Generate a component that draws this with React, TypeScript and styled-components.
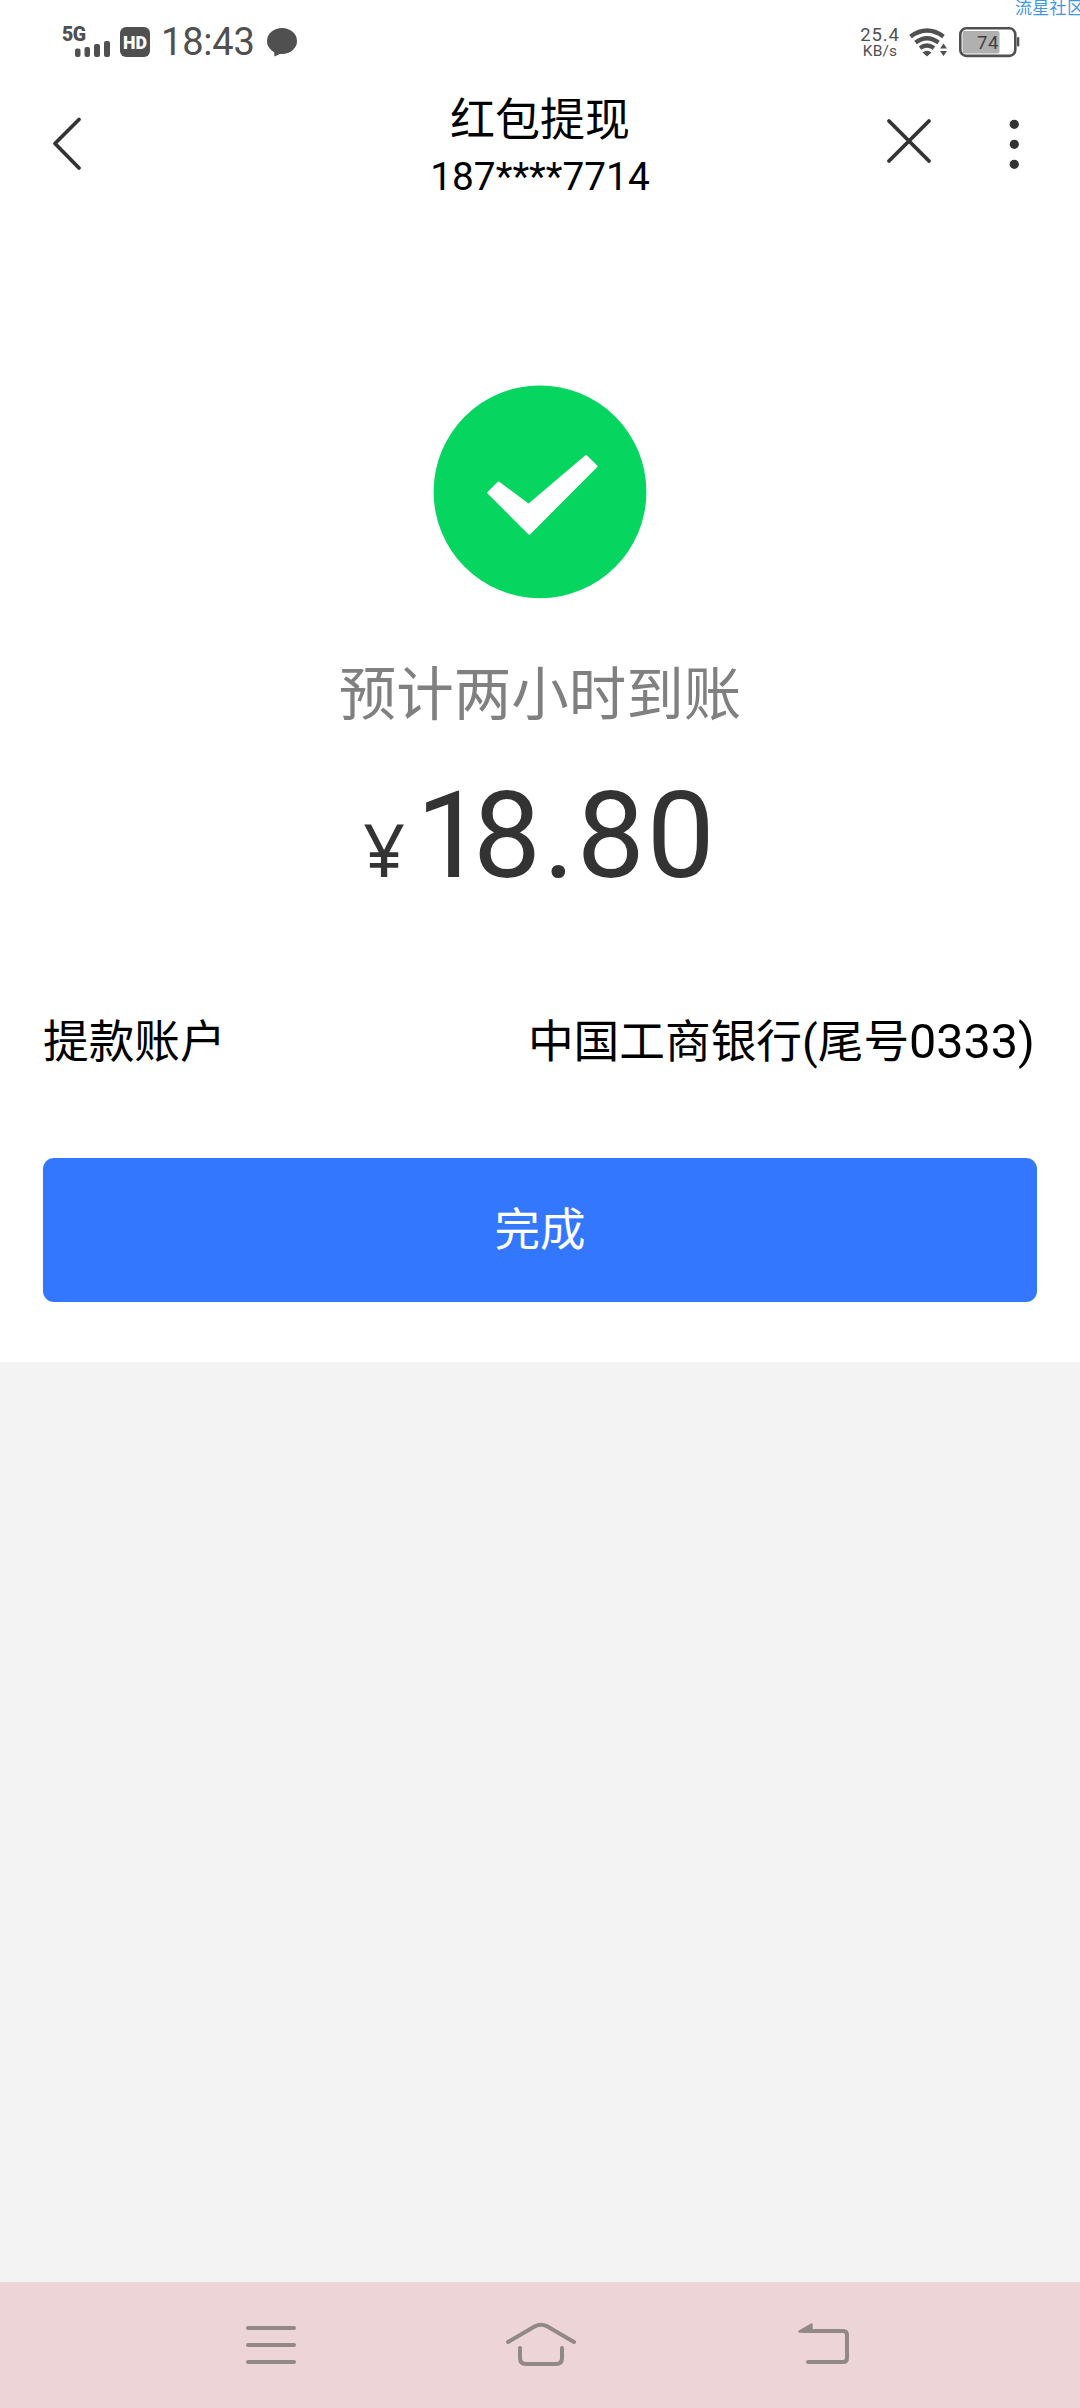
import React from "react";
import styled, { createGlobalStyle } from "styled-components";

const GlobalStyle = createGlobalStyle`
  *, *::before, *::after { box-sizing: border-box; }
  body {
    margin: 0;
    background: #f3f3f3;
    font-family: Roboto, "Noto Sans CJK SC", sans-serif;
  }
  svg { display: block; flex: none; }
`;

const Screen = styled.div`
  position: relative;
  width: 1080px;
  height: 2408px;
  display: flex;
  flex-direction: column;
  overflow: hidden;
  background: #f3f3f3;
`;

const Watermark = styled.span`
  position: absolute;
  top: -1px;
  left: 1015px;
  font-size: 17px;
  line-height: 18px;
  letter-spacing: 0.3px;
  white-space: nowrap;
  color: #3f97ea;
`;

const StatusBar = styled.header`
  height: 84px;
  padding: 0 60px 0 61px;
  display: flex;
  justify-content: space-between;
  align-items: center;
  background: #fff;
  color: #505050;
`;

const StatusGroup = styled.div`
  display: flex;
  align-items: center;
`;

const Clock = styled.span`
  margin: 0 12px 0 10px;
  width: 93px;
  font-size: 38px;
  line-height: 44px;
  letter-spacing: -0.2px;
  white-space: nowrap;
`;

const Speed = styled.div`
  width: 40px;
  margin-right: 8px;
  padding-top: 2px;
  display: flex;
  flex-direction: column;
  align-items: center;
`;

const SpeedLine = styled.span<{ $size: number; $height: number; $spacing: number }>`
  font-size: ${(p) => p.$size}px;
  line-height: ${(p) => p.$height}px;
  letter-spacing: ${(p) => p.$spacing}px;
`;

const BatterySlot = styled.div`
  margin-left: 6px;
`;

const TitleBar = styled.nav`
  height: 132px;
  display: grid;
  grid-template-columns: 340px 1fr 340px;
  background: #fff;
`;

const TitleSide = styled.div<{ $end?: boolean }>`
  display: flex;
  justify-content: ${(p) => (p.$end ? "flex-end" : "flex-start")};
  padding: ${(p) => (p.$end ? "28px 48px 0 0" : "28px 0 0 44px")};
  gap: 51px;
`;

const IconButton = styled.button`
  width: 48px;
  height: 60px;
  padding: 0;
  border: 0;
  background: none;
`;

const TitleBlock = styled.div`
  display: flex;
  flex-direction: column;
  align-items: center;
`;

const Title = styled.h1`
  margin: 9px 0 0;
  font-size: 45px;
  line-height: 56px;
  font-weight: 400;
  color: #000;
`;

const Phone = styled.span`
  font-size: 38.8px;
  line-height: 56px;
  color: #000;
`;

const Result = styled.main`
  height: 1146px;
  padding: 169px 43px 0;
  display: flex;
  flex-direction: column;
  align-items: center;
  background: #fff;
`;

const Hint = styled.p`
  margin: 57px 0 0;
  font-size: 57.5px;
  line-height: 80px;
  color: #808080;
`;

const Amount = styled.div`
  height: 140px;
  margin-top: 30px;
  display: flex;
  align-items: baseline;
  color: #333;
  line-height: 140px;
`;

const Currency = styled.span`
  margin-right: 11px;
  padding-bottom: 2px;
  font-family: "Noto Sans", sans-serif;
  font-size: 73px;
`;

const Figure = styled.span<{ $spacing: number }>`
  font-size: 121px;
  letter-spacing: ${(p) => p.$spacing}px;
`;

const DetailRow = styled.div`
  width: 100%;
  margin-top: 105px;
  padding: 0 2px 0 0;
  display: flex;
  justify-content: space-between;
  font-size: 45.7px;
  line-height: 64px;
  color: #000;
`;

const TailNumber = styled.span`
  font-size: 48.5px;
  line-height: 1;
`;

const DoneButton = styled.button`
  width: 100%;
  height: 144px;
  margin-top: 83px;
  padding: 0 0 8px;
  border: 0;
  border-radius: 11px;
  background: #3377ff;
  color: #fff;
  font-family: inherit;
  font-size: 45.5px;
`;

const NavBar = styled.footer`
  height: 126px;
  margin-top: auto;
  padding: 0 228px 0 241px;
  display: grid;
  grid-template-columns: 262px 289px 60px;
  align-items: center;
  background: #ecd4d7;
`;

const SignalIcon = () => (
  <svg width="52" height="36" viewBox="61 23 52 36" fill="#505050">
    <text x="62" y="39.5" fontFamily="Roboto" fontSize="19.5" fontWeight="900" textLength="24">5G</text>
    <rect x="75" y="47.5" width="5.5" height="8.5" rx="2" />
    <rect x="84.5" y="46" width="5.5" height="10" rx="2" />
    <rect x="94" y="43" width="6" height="13" rx="2" />
    <rect x="104" y="40" width="6" height="16" rx="2" />
  </svg>
);

const HdIcon = () => (
  <svg width="38" height="30" viewBox="113 27 38 30">
    <rect x="120" y="27" width="30" height="30" rx="6" fill="#505050" />
    <text x="123" y="48.6" fontFamily="Roboto" fontSize="18.5" fontWeight="900" textLength="24" lengthAdjust="spacingAndGlyphs" fill="#fff">HD</text>
  </svg>
);

const BubbleIcon = () => (
  <svg width="32" height="30" viewBox="267 26 32 30" fill="#505050">
    <ellipse cx="283" cy="40" rx="15" ry="13" />
    <path d="M275 49 L275.5 55.5 L285 51 Z" />
  </svg>
);

const WifiIcon = () => (
  <svg width="42" height="32" viewBox="909 26 42 32">
    <g fill="none" stroke="#505050" strokeWidth="4.2">
      <path d="M911.5 36.5 Q928 24.5 944.5 36.5" />
      <path d="M916.5 42.5 Q928 34 939.5 42.5" />
      <path d="M921 48 Q928 43 935 48" />
    </g>
    <path d="M923.5 52.5 Q928 49 932.5 52.5 L928 56.5 Z" fill="#505050" />
    <path d="M941 48.5 L944.5 43.5 L948 48.5 Z M941 51 L944.5 56 L948 51 Z" fill="#505050" />
  </svg>
);

const BatteryIcon = () => (
  <svg width="64" height="32" viewBox="957 26 64 32">
    <rect x="963.5" y="31" width="37" height="22.5" rx="2" fill="#b0b0b0" />
    <rect x="961.3" y="28.3" width="55" height="27.6" rx="6" fill="none" stroke="#505050" strokeWidth="2.6" />
    <rect x="1018" y="37" width="2.3" height="9.5" rx="1" fill="#505050" />
    <text x="978" y="49" fontFamily="Roboto" fontSize="18.5" textLength="21.5" fill="#404040">74</text>
  </svg>
);

const BackIcon = () => (
  <svg width="48" height="60" viewBox="44 112 48 60" fill="none" stroke="#333" strokeWidth="3.8" strokeLinecap="round" strokeLinejoin="round">
    <path d="M79 119.5 L55 143.5 L79 168" />
  </svg>
);

const CloseIcon = () => (
  <svg width="48" height="60" viewBox="885 112 48 60" stroke="#333" strokeWidth="3.8" strokeLinecap="round">
    <path d="M889 121 L929 161 M929 121 L889 161" />
  </svg>
);

const MoreIcon = () => (
  <svg width="48" height="60" viewBox="984 112 48 60" fill="#333">
    <circle cx="1014.3" cy="124.3" r="4.6" />
    <circle cx="1014.3" cy="144.3" r="4.6" />
    <circle cx="1014.3" cy="164.3" r="4.6" />
  </svg>
);

const SuccessIcon = () => (
  <svg width="214" height="214" viewBox="433 385 214 214">
    <circle cx="540" cy="491.8" r="106.4" fill="#06d660" />
    <path
      d="M488.8 492.7 L498.5 483 L528.7 505.3 L586 456.5 L596 466.3 L529.3 533.2 Z"
      fill="#fff"
      stroke="#fff"
      strokeWidth="2.8"
      strokeLinejoin="round"
    />
  </svg>
);

const navStroke = {
  fill: "none",
  stroke: "#918987",
  strokeWidth: 4,
  strokeLinecap: "round" as const,
  strokeLinejoin: "round" as const,
};

const MenuIcon = () => (
  <svg width="60" height="52" viewBox="241 2319 60 52" {...navStroke}>
    <path d="M248 2328 H294 M248 2345 H294 M248 2362 H294" />
  </svg>
);

const HomeIcon = () => (
  <svg width="76" height="52" viewBox="503 2319 76 52" {...navStroke}>
    <path d="M508 2342 L535 2326.3 Q541 2323 547 2326.3 L574 2342" />
    <path d="M520 2348 V2358 Q520 2364 526 2364 H556 Q562 2364 562 2358 V2348" />
  </svg>
);

const ReturnIcon = () => (
  <svg width="60" height="52" viewBox="792 2319 60 52" {...navStroke}>
    <path d="M803 2331 H843 Q847 2331 847 2335 V2358 Q847 2362 843 2362 H808" />
    <path d="M799.5 2331.5 L811.5 2324.5 V2331.5 Z" fill="#918987" strokeWidth="2.4" />
  </svg>
);

export default function App() {
  return (
    <Screen>
      <GlobalStyle />
      <StatusBar>
        <StatusGroup>
          <SignalIcon />
          <HdIcon />
          <Clock>18:43</Clock>
          <BubbleIcon />
        </StatusGroup>
        <StatusGroup>
          <Speed>
            <SpeedLine $size={18.5} $height={16} $spacing={0.8}>25.4</SpeedLine>
            <SpeedLine $size={15.5} $height={17} $spacing={0.2}>KB/s</SpeedLine>
          </Speed>
          <WifiIcon />
          <BatterySlot><BatteryIcon /></BatterySlot>
        </StatusGroup>
      </StatusBar>
      <TitleBar>
        <TitleSide>
          <IconButton aria-label="返回"><BackIcon /></IconButton>
        </TitleSide>
        <TitleBlock>
          <Title>红包提现</Title>
          <Phone>187****7714</Phone>
        </TitleBlock>
        <TitleSide $end>
          <IconButton aria-label="关闭"><CloseIcon /></IconButton>
          <IconButton aria-label="更多"><MoreIcon /></IconButton>
        </TitleSide>
      </TitleBar>
      <Result>
        <SuccessIcon />
        <Hint>预计两小时到账</Hint>
        <Amount>
          <Currency>¥</Currency>
          <Figure $spacing={-11}>1</Figure>
          <Figure $spacing={2}>8.80</Figure>
        </Amount>
        <DetailRow>
          <span>提款账户</span>
          <span>中国工商银行(尾号<TailNumber>0333)</TailNumber></span>
        </DetailRow>
        <DoneButton>完成</DoneButton>
      </Result>
      <NavBar>
        <MenuIcon />
        <HomeIcon />
        <ReturnIcon />
      </NavBar>
      <Watermark>流星社区</Watermark>
    </Screen>
  );
}
